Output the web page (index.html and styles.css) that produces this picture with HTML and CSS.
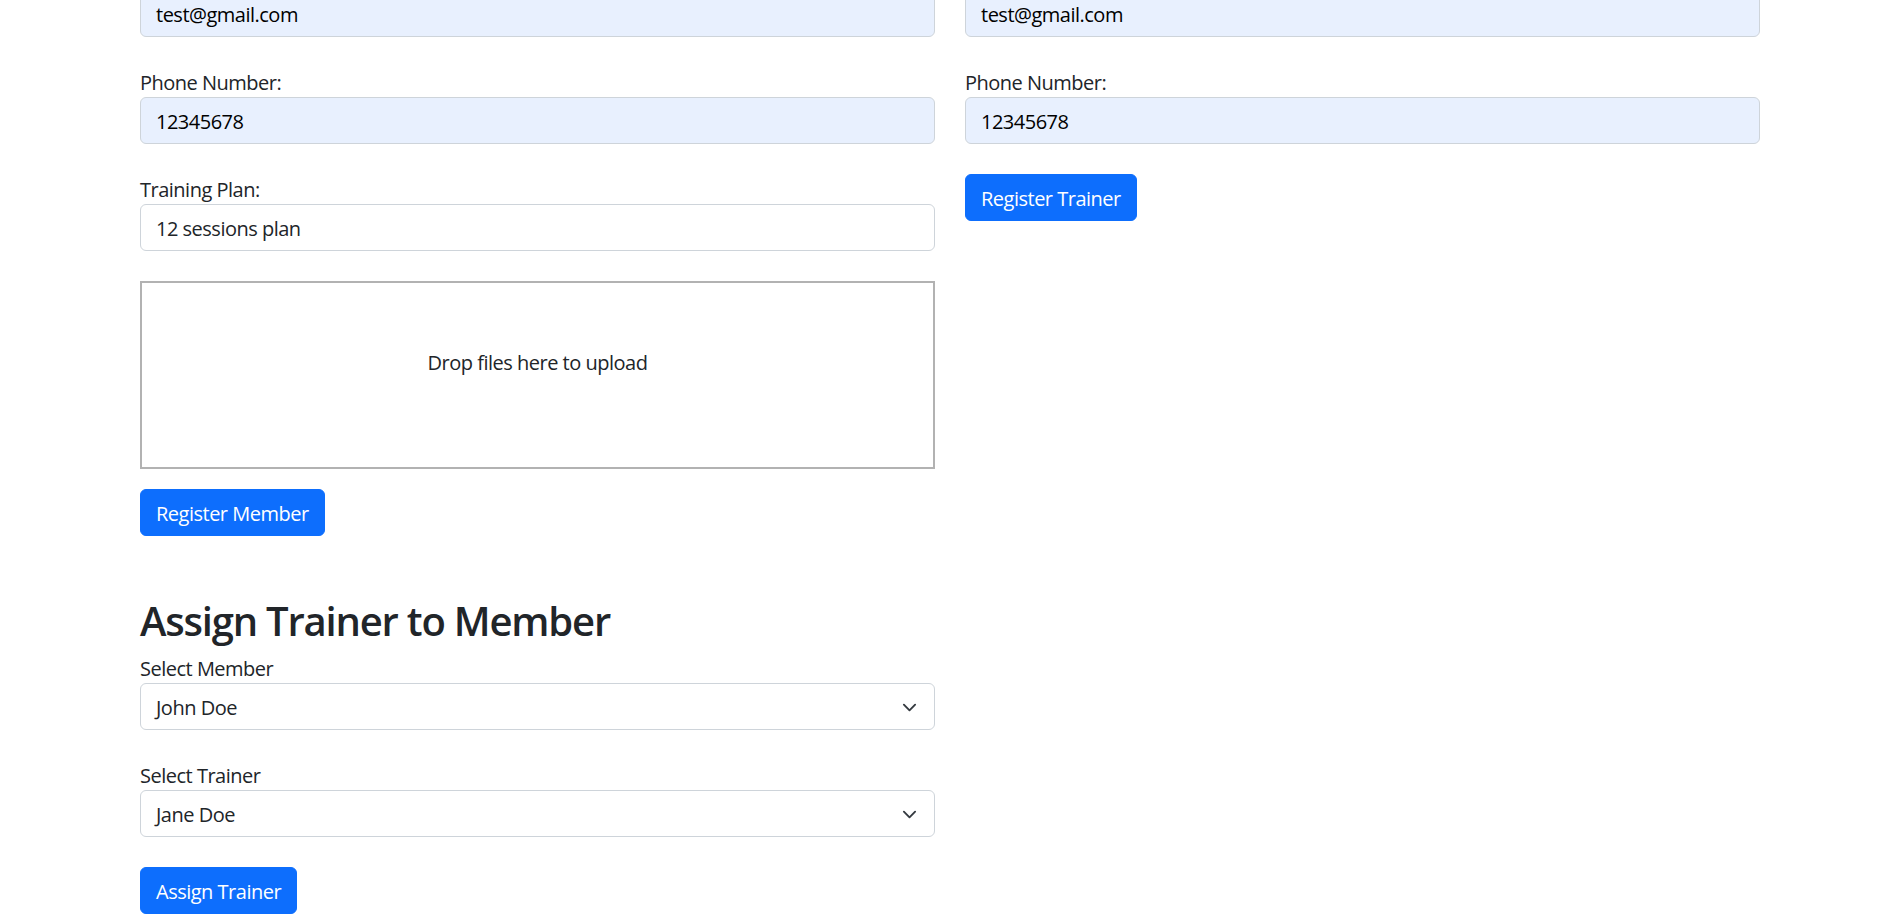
FILE: index.html
```html
<!DOCTYPE html>
<html lang="en">
<head>
<meta charset="utf-8">
<title>Gym Management</title>
<link rel="stylesheet" href="styles.css">
</head>
<body>
<div class="container">
  <div class="row">
    <div class="col">
      <form class="form">
        <div class="field">
          <label class="label">Email:</label>
          <div class="input autofill">test@gmail.com</div>
        </div>
        <div class="field">
          <label class="label">Phone Number:</label>
          <div class="input autofill">12345678</div>
        </div>
        <div class="field">
          <label class="label">Training Plan:</label>
          <div class="input">12 sessions plan</div>
        </div>
        <div class="dropzone">
          <div class="dz-message">Drop files here to upload</div>
        </div>
        <button type="button" class="btn btn-after-dz">Register Member</button>
      </form>
    </div>
    <div class="col">
      <form class="form">
        <div class="field">
          <label class="label">Email:</label>
          <div class="input autofill">test@gmail.com</div>
        </div>
        <div class="field">
          <label class="label">Phone Number:</label>
          <div class="input autofill">12345678</div>
        </div>
        <button type="button" class="btn">Register Trainer</button>
      </form>
    </div>
  </div>

  <div class="row assign">
    <section class="col">
      <h2 class="title">Assign Trainer to Member</h2>
      <div class="field">
        <label class="label">Select Member</label>
        <div class="select">
          <span>John Doe</span>
          <svg class="chev" width="15" height="15" viewBox="0 0 16 16"><path d="m2 5 6 6 6-6" fill="none" stroke="#343a40" stroke-width="2" stroke-linecap="round" stroke-linejoin="round"/></svg>
        </div>
      </div>
      <div class="field">
        <label class="label">Select Trainer</label>
        <div class="select">
          <span>Jane Doe</span>
          <svg class="chev" width="15" height="15" viewBox="0 0 16 16"><path d="m2 5 6 6 6-6" fill="none" stroke="#343a40" stroke-width="2" stroke-linecap="round" stroke-linejoin="round"/></svg>
        </div>
      </div>
      <button type="button" class="btn">Assign Trainer</button>
    </section>
  </div>
</div>
</body>
</html>
```
FILE: styles.css
```css
* { box-sizing: border-box; }

html, body {
  margin: 0;
  padding: 0;
  background: #fff;
}

body {
  font-family: "Open Sans", "Noto Sans", sans-serif;
  font-size: 20px;
  line-height: 30px;
  letter-spacing: -0.5px;
  color: #212529;
}

.container {
  width: 1650px;
  margin: -40px auto 0;
  padding: 0 15px;
}

.row {
  display: grid;
  grid-template-columns: 1fr 1fr;
  column-gap: 30px;
}

.form {
  margin: 0;
}

.field {
  margin-bottom: 30px;
}

.label {
  display: block;
  height: 30px;
  padding-top: 1px;
  line-height: 30px;
}

.input,
.select {
  height: 47px;
  padding: 8px 15px 6px;
  border: 1px solid #ced4da;
  border-radius: 6px;
  background: #fff;
  color: #212529;
  line-height: 31px;
}

.input.autofill {
  background: #e8f0fe;
  color: #000;
}

.select {
  display: flex;
  align-items: center;
  justify-content: space-between;
  padding-right: 17px;
}

.chev {
  display: block;
}

.dropzone {
  height: 188px;
  border: 2px solid rgba(0, 0, 0, 0.3);
  padding: 25px;
  text-align: center;
}

.dz-message {
  margin: 40px 0;
}

.btn {
  display: inline-block;
  height: 47px;
  padding: 8px 15px 6px;
  border: 1px solid #0d6efd;
  border-radius: 6px;
  background: #0d6efd;
  color: #fff;
  font-family: inherit;
  font-size: 20px;
  letter-spacing: -0.5px;
  line-height: 31px;
  cursor: pointer;
}

.btn-after-dz {
  margin-top: 20px;
}

.assign {
  margin-top: 59px;
}

.title {
  margin: 0 0 8px;
  padding-top: 2px;
  font-size: 40px;
  line-height: 48px;
  font-weight: 600;
  letter-spacing: -1.2px;
}
```
